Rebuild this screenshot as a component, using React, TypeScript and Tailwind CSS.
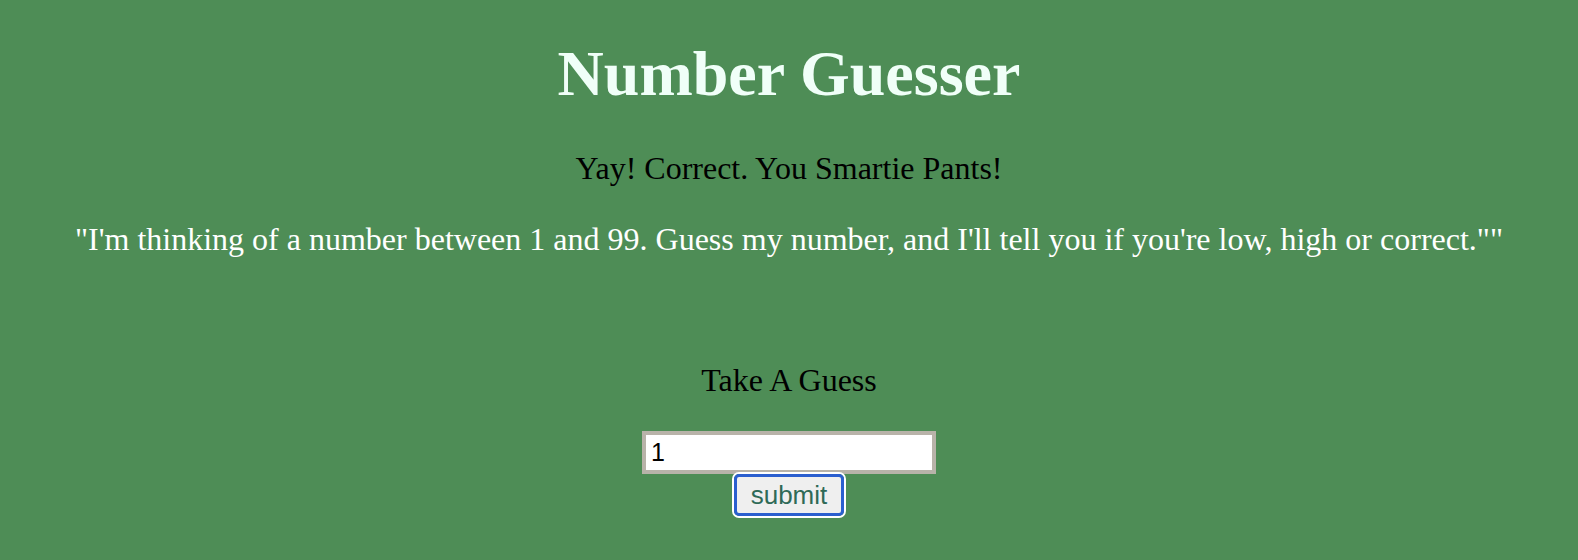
export default function App() {
  return (
    <div className="min-h-[560px] bg-[#4e8d56] font-['Liberation_Serif',serif] text-center">
      <h1 className="pt-[38px] text-[64px] leading-[72px] font-bold text-[#f0fff8]">Number Guesser</h1>
      <p className="mt-[40px] text-[32px] leading-[36px] text-black">Yay! Correct. You Smartie Pants!</p>
      <p className="mt-[35px] text-[32px] leading-[36px] text-white">
        "I'm thinking of a number between 1 and 99. Guess my number, and I'll tell you if you're low, high or correct.""
      </p>
      <p className="mt-[105px] text-[32px] leading-[36px] text-black">Take A Guess</p>
      <div className="mt-[33px] flex flex-col items-center">
        <input
          className="h-[43px] w-[294px] border-4 border-[#b8b3a9] bg-white px-[5px] font-['Liberation_Sans',sans-serif] text-[25px] text-black outline-none"
          defaultValue="1"
          type="text"
        />
        <button
          className="-mt-[2px] rounded-[7px] border-2 border-white p-0"
          type="button"
        >
          <span className="block rounded-[5px] border-[3px] border-[#2b5fcf] bg-[#efefef] px-[14px] font-['Liberation_Sans',sans-serif] text-[26px] leading-[36px] text-[#2f6a57]">
            submit
          </span>
        </button>
      </div>
    </div>
  );
}
